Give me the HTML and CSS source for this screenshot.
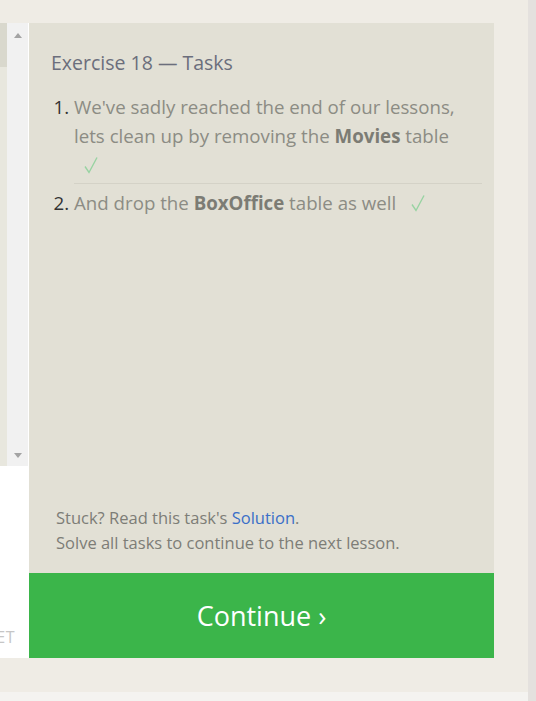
FILE: index.html
```html
<!DOCTYPE html>
<html>
<head>
<meta charset="utf-8">
<link rel="stylesheet" href="styles.css">
</head>
<body>
<div class="viewport">
  <div class="main">
    <div class="row">
      <div class="editor">
        <div class="editor-scroll">
          <div class="gutter"><div class="gutter-active"></div></div>
          <div class="scrollbar">
            <span class="arrow arrow-up"></span>
            <span class="arrow arrow-down"></span>
          </div>
        </div>
        <div class="editor-foot"><span class="reset">RESET</span></div>
      </div>
      <div class="lesson">
        <div class="tasks">
          <h2 class="title">Exercise 18 — Tasks</h2>
          <ol class="task-list">
            <li class="task"><span class="task-text">We've sadly reached the end of our lessons, lets clean up by removing the <b>Movies</b> table <svg class="check" viewBox="0 0 20 18" width="20" height="18"><path d="M1 10.5 L5 16.5 L13 1.5" fill="none" stroke="#98d3a2" stroke-width="1.4"/></svg></span></li>
            <li class="task"><span class="task-text">And drop the <b>BoxOffice</b> table as well <svg class="check" viewBox="0 0 20 18" width="20" height="18"><path d="M1 10.5 L5 16.5 L13 1.5" fill="none" stroke="#98d3a2" stroke-width="1.4"/></svg></span></li>
          </ol>
          <div class="help">
            <p>Stuck? Read this task's <a class="link">Solution</a>.</p>
            <p>Solve all tasks to continue to the next lesson.</p>
          </div>
        </div>
        <div class="continue">Continue ›</div>
      </div>
    </div>
    <div class="footer"></div>
  </div>
  <div class="rail"></div>
</div>
</body>
</html>
```
FILE: styles.css
```css
html, body {
  margin: 0;
  padding: 0;
  height: 100%;
}
body {
  background: #efece5;
  font-family: "Open Sans", "Noto Sans", sans-serif;
  overflow: hidden;
}
.viewport {
  display: flex;
  height: 701px;
}
.main {
  width: 528px;
  display: flex;
  flex-direction: column;
  padding-top: 23px;
  box-sizing: border-box;
}
.rail {
  width: 8px;
  background: #e4e1de;
}
.row {
  display: flex;
  height: 635px;
}
.editor {
  width: 29px;
  display: flex;
  flex-direction: column;
  background: #fff;
}
.editor-scroll {
  height: 443px;
  display: flex;
}
.gutter {
  width: 7px;
  background: #e8e7de;
}
.gutter-active {
  height: 44px;
  background: #d9d8cd;
}
.scrollbar {
  width: 21px;
  background: #f1f1f1;
  display: flex;
  flex-direction: column;
  justify-content: space-between;
  align-items: center;
  padding: 10px 0 8px;
  box-sizing: border-box;
}
.arrow {
  width: 0;
  height: 0;
  border-left: 4.5px solid transparent;
  border-right: 4.5px solid transparent;
}
.arrow-up { border-bottom: 5px solid #a3a3a3; }
.arrow-down { border-top: 5px solid #a3a3a3; }
.editor-foot {
  flex: 1;
  display: flex;
  align-items: flex-end;
  justify-content: flex-end;
  overflow: hidden;
  padding-bottom: 10px;
}
.reset {
  font-size: 16px;
  color: #c6c6c6;
  margin-right: 14px;
  letter-spacing: 0.5px;
}
.lesson {
  width: 465px;
  display: flex;
  flex-direction: column;
}
.tasks {
  flex: 1;
  background: #e2e0d5;
  padding: 27px 12px 18px 22px;
  display: flex;
  flex-direction: column;
}
.title {
  margin: 0;
  font-weight: normal;
  font-size: 19.5px;
  line-height: 26px;
  color: #6b6e7c;
}
.task-list {
  margin: 16px 0 0;
  padding: 0 0 0 23px;
  font-size: 18.7px;
  line-height: 29px;
  color: #333;
}
.task {
  padding-bottom: 4px;
}
.task + .task {
  border-top: 1px solid #d4d2c7;
  padding-top: 4px;
}
.task-text {
  color: #8c8c84;
}
.task-text b {
  color: #7c7c74;
  font-weight: bold;
}
.check {
  display: inline-block;
  vertical-align: -2px;
  margin-left: 10px;
}
.help {
  margin-top: auto;
  padding-left: 5px;
  font-size: 16.5px;
  line-height: 25px;
  color: #7d7d77;
}
.help p {
  margin: 0;
}
.link {
  color: #3a6fc8;
}
.continue {
  height: 85px;
  background: #3bb54a;
  color: #fff;
  font-size: 27px;
  display: flex;
  align-items: center;
  justify-content: center;
}
.footer {
  margin-top: 34px;
  flex: 1;
  background: #f4f3f0;
}
```
